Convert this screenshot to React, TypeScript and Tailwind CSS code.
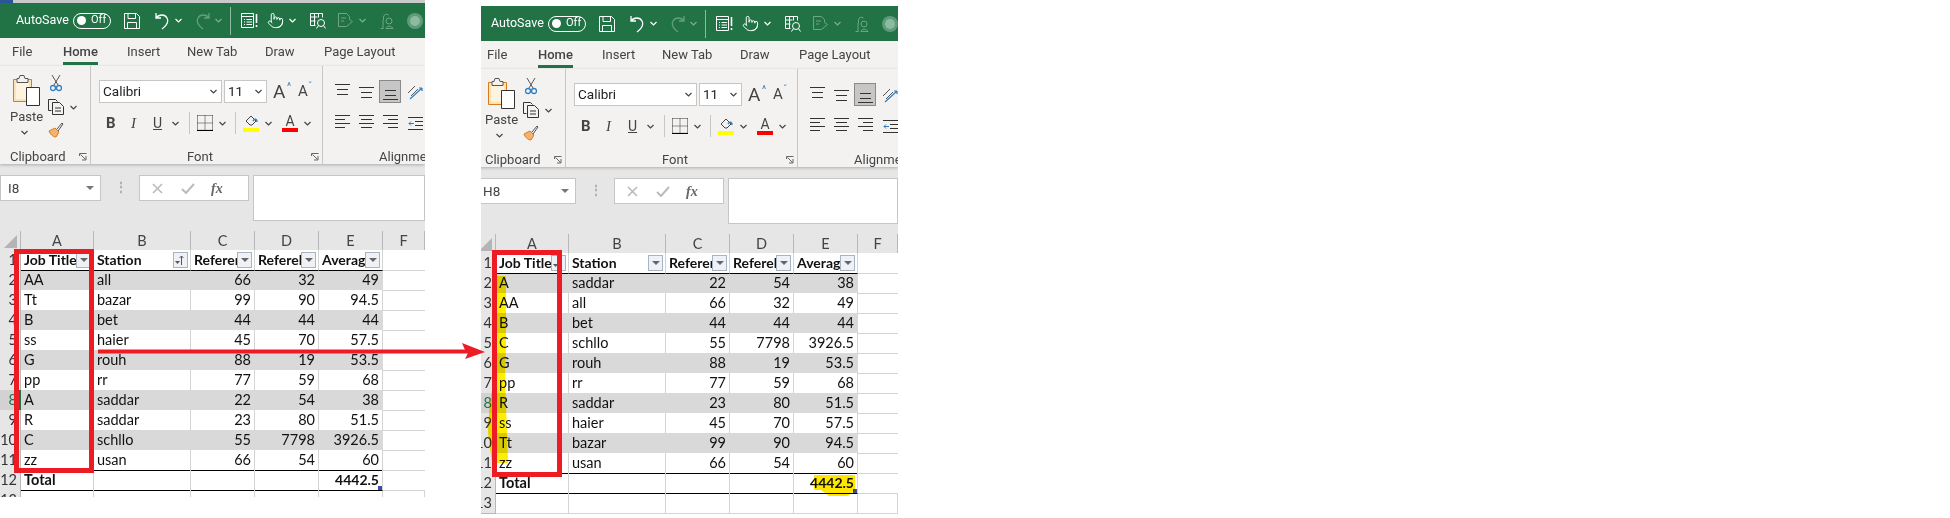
import { FC, ReactNode } from 'react';
import { Pointer } from 'lucide-react';

type Row = [string, string, string, string, string];

const LEFT_ROWS: Row[] = [
  ['AA', 'all', '66', '32', '49'],
  ['Tt', 'bazar', '99', '90', '94.5'],
  ['B', 'bet', '44', '44', '44'],
  ['ss', 'haier', '45', '70', '57.5'],
  ['G', 'rouh', '88', '19', '53.5'],
  ['pp', 'rr', '77', '59', '68'],
  ['A', 'saddar', '22', '54', '38'],
  ['R', 'saddar', '23', '80', '51.5'],
  ['C', 'schllo', '55', '7798', '3926.5'],
  ['zz', 'usan', '66', '54', '60'],
];

const RIGHT_ROWS: Row[] = [
  ['A', 'saddar', '22', '54', '38'],
  ['AA', 'all', '66', '32', '49'],
  ['B', 'bet', '44', '44', '44'],
  ['C', 'schllo', '55', '7798', '3926.5'],
  ['G', 'rouh', '88', '19', '53.5'],
  ['pp', 'rr', '77', '59', '68'],
  ['R', 'saddar', '23', '80', '51.5'],
  ['ss', 'haier', '45', '70', '57.5'],
  ['Tt', 'bazar', '99', '90', '94.5'],
  ['zz', 'usan', '66', '54', '60'],
];

const GRID = 'grid grid-cols-[21px_73px_97px_64px_64px_64px_1fr]';

const Chevron: FC<{ className?: string; color?: string }> = ({ className = '', color = '#444' }) => (
  <svg width="7" height="5" viewBox="0 0 7 5" className={`shrink-0 ${className}`} fill="none" stroke={color} strokeWidth="1.2">
    <path d="M.5 1l3 3 3-3" />
  </svg>
);

const Icon: FC<{ w: number; h: number; className?: string; stroke?: string; children: ReactNode }> = ({
  w,
  h,
  className = '',
  stroke = 'white',
  children,
}) => (
  <svg width={w} height={h} viewBox={`0 0 ${w} ${h}`} fill="none" stroke={stroke} strokeWidth="1" className={`shrink-0 ${className}`}>
    {children}
  </svg>
);

const Launcher = () => (
  <Icon w={8} h={8} stroke="#666">
    <path d="M.5 3V.5H7.5M1.5 1.5l5 5M3 7h4V3" />
  </Icon>
);

const TitleBar = () => (
  <div className="flex h-[35px] items-center bg-[#217346] text-white">
    <span className="ml-[16px] w-[52px] text-[12.5px]">AutoSave</span>
    <div className="ml-[5px] flex h-[16px] w-[38px] shrink-0 items-center rounded-full border border-white">
      <span className="ml-[3px] h-[9px] w-[9px] rounded-full bg-white" />
      <span className="ml-[5px] text-[11px]">Off</span>
    </div>
    <Icon w={16} h={16} className="ml-[13px]">
      <path d="M.5.5h12l3 3v12H.5zM4 .5v5h7.5v-5M3.5 15.5v-6h9v6" />
    </Icon>
    <Icon w={16} h={18} className="ml-[14px]">
      <path d="M2 1v5h5M2 6c3-4 9-4 11 0 2 4-1 8-5 11" strokeWidth="1.3" />
    </Icon>
    <Chevron color="white" className="ml-[5px]" />
    <Icon w={16} h={18} className="ml-[13px] -scale-x-100 opacity-30">
      <path d="M2 1v5h5M2 6c3-4 9-4 11 0 2 4-1 8-5 11" strokeWidth="1.3" />
    </Icon>
    <Chevron color="#7fae94" className="ml-[4px]" />
    <span className="ml-[8px] h-[28px] w-px bg-[#8fb9a3]" />
    <Icon w={17} h={15} className="ml-[10px]">
      <path d="M.5.5h12v14H.5zM.5 3.5h12M3 6.5h1m1.500 0H11M3 9h1m1.500 0H11M3 11.500h1m1.500 0H11" />
      <path d="M15.500 1v9M15.500 12v2" strokeWidth="1.6" />
    </Icon>
    <Pointer size={17} strokeWidth={1.4} className="ml-[9px] shrink-0" />
    <Chevron color="white" className="ml-[5px]" />
    <Icon w={17} h={17} className="ml-[14px]">
      <path d="M.5 1.500h12v4M.5 1.500v12h5M.5 5h7M.5 9h5M4.500 1.500v12M8.500 1.500v4" />
      <circle cx="11" cy="11" r="3.500" />
      <path d="M8.500 13.500l-2 3M13.500 13.500l2 3" />
    </Icon>
    <Icon w={15} h={16} className="ml-[11px] opacity-35">
      <path d="M.5.5h8l3 3v3l3 2-6 5H.5zM3 5h5M3 8h3" />
    </Icon>
    <Chevron color="#7fae94" className="ml-[6px]" />
    <Icon w={14} h={16} className="ml-[14px] opacity-35">
      <circle cx="9" cy="8" r="3" />
      <path d="M3.500 7V4a3 3 0 0 1 5-2M.5 15.500h3M3 7v8.500M6 15.500c0-3 6-3 7 0z" />
    </Icon>
    <span className="ml-[13px] flex h-[16px] w-[16px] shrink-0 items-center justify-center rounded-full bg-[#5f9b7b]">
      <span className="h-[10px] w-[10px] rounded-full bg-[#8bbba0]" />
    </span>
  </div>
);

const Tabs = () => (
  <div className="flex h-[28px] items-start bg-[#f3f2f1] pt-[5px] text-[13px] leading-[18px] text-[#444]">
    <span className="ml-[12px] w-[51px]">File</span>
    <span className="w-[64px] font-medium">
      <span className="inline-block border-b-[3px] border-[#217346] pb-[1px]">Home</span>
    </span>
    <span className="w-[60px]">Insert</span>
    <span className="w-[78px]">New Tab</span>
    <span className="w-[59px]">Draw</span>
    <span className="whitespace-nowrap">Page Layout</span>
  </div>
);

const AlignLines: FC<{ kind: 'top' | 'mid' | 'bottom' | 'left' | 'center' | 'right' }> = ({ kind }) => {
  const paths = {
    top: 'M0 1.500h15M2 6.500h11M2 11.500h11',
    mid: 'M0 4.500h15M2 9.500h11M2 14.500h11',
    bottom: 'M2 7.500h11M2 12.500h11M0 16.500h15',
    left: 'M0 1.500h15M0 5.500h10M0 9.500h15M0 13.500h10',
    center: 'M0 1.500h15M2 5.500h11M0 9.500h15M2 13.500h11',
    right: 'M0 1.500h15M5 5.500h10M0 9.500h15M5 13.500h10',
  };
  return (
    <Icon w={15} h={18} stroke="#333">
      <path d={paths[kind]} />
    </Icon>
  );
};

const ClipboardGroup = () => (
  <div className="flex h-[98px] w-[91px] shrink-0 flex-col border-r border-[#c8c6c4]">
    <div className="flex h-[83px]">
      <div className="ml-[10px] flex w-[30px] flex-col items-start pt-[9px]">
        <Icon w={28} h={31} stroke="#555" className="ml-[3px]">
          <path d="M.5 4.500h18v22H.5z" stroke="#d67b1f" fill="#fbe3b8" />
          <path d="M3 7h13v17H3z" stroke="none" fill="#fdf3df" />
          <path d="M7 .500h4l1 3h3v4H4v-4h2z" fill="#f3f2f1" />
          <path d="M13.500 12.500h13v18h-13z" fill="white" stroke="#333" />
        </Icon>
        <span className="mt-[3px] text-[13px] leading-[16px] text-[#444]">Paste</span>
        <Chevron className="ml-[11px] mt-[5px]" />
      </div>
      <div className="ml-[8px] flex flex-col items-start pt-[8px]">
        <Icon w={12} h={18} className="ml-[2px]" stroke="#555">
          <path d="M2 1l6 10M10 1L4 11" />
          <circle cx="3" cy="14" r="2.500" stroke="#2f7fc1" strokeWidth="1.300" />
          <circle cx="9" cy="14" r="2.500" stroke="#2f7fc1" strokeWidth="1.300" />
        </Icon>
        <div className="mt-[7px] flex items-center">
          <Icon w={16} h={16} stroke="#333">
            <path d="M.5.500h7l2 2M.5.500v11h3" />
            <path d="M4.500 3.500h7l4 4v8h-11zM7 9h6M7 12h6" fill="#f3f2f1" />
          </Icon>
          <Chevron className="ml-[6px]" />
        </div>
        <Icon w={16} h={16} className="mt-[7px]" stroke="#d67b1f">
          <path d="M1 9l6-3 4 4-3 5c-3 0-6-3-7-6z" fill="#f6b26b" />
          <path d="M9 7l5-6 1 1-5 7" stroke="#555" />
        </Icon>
      </div>
    </div>
    <div className="flex h-[15px] items-center justify-between pr-[3px] pl-[10px]">
      <span className="text-[13px] leading-[15px] text-[#444]">Clipboard</span>
      <Launcher />
    </div>
  </div>
);

const FontGroup = () => (
  <div className="flex h-[98px] w-[232px] shrink-0 flex-col border-r border-[#c8c6c4]">
    <div className="flex h-[83px] flex-col">
      <div className="mt-[14px] flex items-center">
        <div className="ml-[8px] flex h-[23px] w-[123px] items-center justify-between border border-[#c6c6c6] bg-white pr-[4px] pl-[3px] text-[13.5px] text-[#222]">
          Calibri
          <Chevron />
        </div>
        <div className="ml-[2px] flex h-[23px] w-[43px] items-center justify-between border border-[#c6c6c6] bg-white pr-[4px] pl-[3px] text-[13.5px] text-[#222]">
          11
          <Chevron />
        </div>
        <span className="relative ml-[6px] w-[25px] text-[19px] leading-none text-[#444]">
          A
          <span className="absolute top-[0px] left-[14px] text-[10px] text-[#2f7fc1]">^</span>
        </span>
        <span className="relative w-[20px] text-[15px] leading-none text-[#444]">
          A
          <span className="absolute -top-[2px] left-[10px] text-[10px] text-[#2f7fc1]">ˇ</span>
        </span>
      </div>
      <div className="mt-[8px] flex h-[24px] items-center text-[#444]">
        <span className="ml-[15px] w-[25px] text-[15px] font-bold">B</span>
        <span className="w-[22px] font-['Liberation_Serif'] text-[15px] italic">I</span>
        <span className="w-[19px] text-[14px] underline">U</span>
        <Chevron />
        <span className="ml-[10px] h-[22px] w-px bg-[#c8c6c4]" />
        <Icon w={16} h={16} className="ml-[7px]" stroke="#333">
          <path d="M.5.500h15M.5.500v15M15.500.500v15M8 .500v15M.5 8h15" strokeDasharray="1 1" />
          <path d="M0 15.500h16" strokeWidth="1.200" stroke="#000" />
        </Icon>
        <Chevron className="ml-[6px]" />
        <span className="ml-[9px] h-[22px] w-px bg-[#c8c6c4]" />
        <div className="ml-[7px] flex w-[16px] flex-col items-center">
          <Icon w={16} h={12} stroke="#444">
            <path d="M3 6l5-5 5 5-4 4H7z" />
            <path d="M10 6c2-3 4-2 4 1" stroke="#2f7fc1" strokeWidth="1.500" />
          </Icon>
          <span className="mt-[1px] h-[4px] w-[16px] bg-[#ffff00]" />
        </div>
        <Chevron className="ml-[6px]" />
        <div className="ml-[10px] flex w-[16px] flex-col items-center">
          <span className="text-[14px] leading-[13px] text-[#444]">A</span>
          <span className="h-[4px] w-[16px] bg-[#ff0000]" />
        </div>
        <Chevron className="ml-[6px]" />
      </div>
    </div>
    <div className="flex h-[15px] items-center justify-between pr-[3px] pl-[96px]">
      <span className="text-[13px] leading-[15px] text-[#444]">Font</span>
      <Launcher />
    </div>
  </div>
);

const AlignmentGroup = () => (
  <div className="flex h-[98px] flex-1 flex-col overflow-hidden">
    <div className="flex h-[83px] flex-col">
      <div className="mt-[14px] flex h-[23px] items-center">
        <div className="ml-[12px]"><AlignLines kind="top" /></div>
        <div className="ml-[9px]"><AlignLines kind="mid" /></div>
        <div className="ml-[5px] flex h-[23px] w-[22px] shrink-0 items-center justify-center border border-[#8a8a8a] bg-[#c6c6c6]">
          <AlignLines kind="bottom" />
        </div>
        <Icon w={16} h={16} className="ml-[6px]" stroke="#555">
          <path d="M1 9l7-7M4 12l7-7" />
          <path d="M3 15L15 4m0 0h-3m3 0v3" stroke="#2f7fc1" strokeWidth="1.200" />
        </Icon>
      </div>
      <div className="mt-[8px] flex h-[24px] items-center">
        <div className="ml-[12px]"><AlignLines kind="left" /></div>
        <div className="ml-[9px]"><AlignLines kind="center" /></div>
        <div className="ml-[9px]"><AlignLines kind="right" /></div>
        <Icon w={15} h={15} className="ml-[10px]" stroke="#333">
          <path d="M0 1.500h15M7 5.500h8M7 9.500h8M0 13.500h15" />
          <path d="M6 7.500H1m2-2l-2 2 2 2" stroke="#2f7fc1" />
        </Icon>
      </div>
    </div>
    <div className="flex h-[15px] items-center pl-[56px]">
      <span className="text-[13px] leading-[15px] whitespace-nowrap text-[#444]">Alignment</span>
    </div>
  </div>
);

const Ribbon = () => (
  <div className="relative flex h-[98px] bg-[#f3f2f1] shadow-[0_1px_3px_rgba(0,0,0,0.25)]">
    <ClipboardGroup />
    <FontGroup />
    <AlignmentGroup />
  </div>
);

const FormulaBar: FC<{ nameBox: string }> = ({ nameBox }) => (
  <div className="flex h-[67px] items-start bg-[#e6e6e6] pt-[11px]">
    <div className="flex h-[26px] w-[101px] shrink-0 items-center justify-between border border-[#c6c6c6] bg-white pr-[6px] pl-[7px] text-[13.5px] text-[#444]">
      {nameBox}
      <span className="h-0 w-0 border-x-[4px] border-t-[4px] border-x-transparent border-t-[#777]" />
    </div>
    <span className="mt-[5px] ml-[14px] text-[12px] leading-[14px] font-bold text-[#aaa]">⋮</span>
    <div className="ml-[12px] flex h-[26px] w-[110px] shrink-0 items-center border border-[#c6c6c6] bg-white">
      <Icon w={11} h={11} stroke="#bbb" className="ml-[12px]">
        <path d="M1 1l9 9M10 1l-9 9" strokeWidth="1.600" />
      </Icon>
      <Icon w={14} h={11} stroke="#bbb" className="ml-[18px]">
        <path d="M1 6l4 4 8-9" strokeWidth="2" />
      </Icon>
      <span className="ml-[16px] font-['Liberation_Serif'] text-[14px] font-bold text-[#666] italic">fx</span>
    </div>
    <div className="ml-[4px] h-[46px] flex-1 border border-[#c6c6c6] bg-white" />
  </div>
);

const FilterButton: FC<{ sorted?: boolean }> = ({ sorted }) => (
  <span className="absolute top-[2px] right-[2px] flex h-[16px] w-[15px] items-center justify-center border border-[#a9b4c2] bg-[#eef2f6]">
    {sorted ? (
      <Icon w={11} h={11} stroke="#555">
        <path d="M6.500 10V1m-2 2l2-2 2 2" />
        <path d="M0 6h5l-2.500 3z" fill="#555" stroke="none" />
      </Icon>
    ) : (
      <span className="h-0 w-0 border-x-[4px] border-t-[4px] border-x-transparent border-t-[#666]" />
    )}
  </span>
);

const ColHeader = () => (
  <div className={`${GRID} h-[19px] bg-[#e6e6e6] text-[14.5px] leading-[19px] text-[#444]`}>
    <div className="flex items-end justify-end border-r border-[#b8b8b8] pr-[3px] pb-[2px]">
      <svg width="13" height="13" viewBox="0 0 13 13" className="shrink-0"><path d="M13 0v13H0z" fill="#b4b4b4" /></svg>
    </div>
    {['A', 'B', 'C', 'D', 'E', 'F'].map((c) => (
      <div key={c} className="border-r border-[#b8b8b8] text-center">{c}</div>
    ))}
  </div>
);

const RowHead: FC<{ n: number; selected?: boolean }> = ({ n, selected }) => (
  <div
    className={
      selected
        ? 'border-r-2 border-b border-[#217346] border-b-[#b8b8b8] bg-[#d2d2d2] pr-[2px] text-right text-[#217346]'
        : 'border-r border-b border-[#b8b8b8] bg-[#e6e6e6] pr-[3px] text-right text-[#333]'
    }
  >
    {n}
  </div>
);

const Sheet: FC<{ rows: Row[]; sortedCol: 'A' | 'B'; total: string }> = ({ rows, sortedCol, total }) => {
  const head = ['Job Title', 'Station', 'Referen', 'Referel', 'Average'];
  return (
    <div className="bg-white font-['Lato'] text-[14.5px] leading-[20px] text-[#111]">
      <ColHeader />
      <div className={`${GRID} h-[20px]`}>
        <RowHead n={1} />
        {head.map((h, i) => (
          <div key={h} className="relative overflow-hidden border-r border-b border-r-[#d4d4d4] border-b-black pl-[3px] text-[14px] font-bold whitespace-nowrap">
            {h}
            <FilterButton sorted={(sortedCol === 'A' && i === 0) || (sortedCol === 'B' && i === 1)} />
          </div>
        ))}
        <div className="border-b border-[#d4d4d4]" />
      </div>
      {rows.map((r, i) => {
        const band = i % 2 === 0;
        const last = i === rows.length - 1;
        const edge = last ? 'border-b-black' : band ? 'border-b-[#d9d9d9]' : 'border-b-[#d4d4d4]';
        const fill = band ? 'bg-[#d9d9d9] border-r-[#d9d9d9]' : 'bg-white border-r-[#d4d4d4]';
        return (
          <div key={i} className={`${GRID} h-[20px]`}>
            <RowHead n={i + 2} selected={i === 6} />
            {r.map((v, j) => (
              <div key={j} className={`border-r border-b ${fill} ${edge} ${j < 2 ? 'pl-[3px]' : 'pr-[3px] text-right'}`}>
                {v}
              </div>
            ))}
            <div className="border-b border-[#d4d4d4]" />
          </div>
        );
      })}
      <div className={`${GRID} h-[20px]`}>
        <RowHead n={12} />
        <div className="border-r border-b border-r-[#d4d4d4] border-b-black pl-[3px] font-bold">Total</div>
        <div className="border-r border-b border-r-[#d4d4d4] border-b-black" />
        <div className="border-r border-b border-r-[#d4d4d4] border-b-black" />
        <div className="border-r border-b border-r-[#d4d4d4] border-b-black" />
        <div className="relative border-r border-b border-r-[#d4d4d4] border-b-black pr-[3px] text-right text-[14px] font-bold">
          {total}
          <span className="absolute right-0 bottom-0 h-[4px] w-[4px] bg-[#3f4fa0]" />
        </div>
        <div className="border-b border-[#d4d4d4]" />
      </div>
      <div className={`${GRID} h-[20px]`}>
        <RowHead n={13} />
        {[0, 1, 2, 3, 4, 5].map((c) => (
          <div key={c} className="border-r border-b border-[#d4d4d4]" />
        ))}
      </div>
    </div>
  );
};

const ExcelWindow: FC<{ nameBox: string; rows: Row[]; sortedCol: 'A' | 'B' }> = ({ nameBox, rows, sortedCol }) => (
  <div className="font-['Roboto']">
    <TitleBar />
    <Tabs />
    <Ribbon />
    <FormulaBar nameBox={nameBox} />
    <Sheet rows={rows} sortedCol={sortedCol} total="4442.5" />
  </div>
);

export default function App() {
  return (
    <div className="relative h-[518px] w-[1950px] overflow-hidden bg-white">
      <div className="absolute top-0 left-0 h-[497px] w-[425px] overflow-hidden">
        <div className="relative h-[3px] bg-[#c9c9c9]">
          <span className="absolute top-0 left-0 h-[3px] w-[13px] bg-[#2b579a]" />
        </div>
        <ExcelWindow nameBox="I8" rows={LEFT_ROWS} sortedCol="B" />
      </div>

      <div className="absolute top-[6px] left-[481px] h-[512px] w-[417px] overflow-hidden">
        <div className="ml-[-6px] w-[423px]">
          <ExcelWindow nameBox="H8" rows={RIGHT_ROWS} sortedCol="A" />
        </div>
      </div>

      {/* highlighter marks, painted over the second sheet */}
      <svg width="1950" height="518" className="pointer-events-none absolute inset-0 mix-blend-multiply">
        <path d="M497 276h9v70l-1 30 3 87h-16l-4-30c0-20 4-45 8-66l1-10z" fill="#ffee00" />
        <path d="M814 475h41v16l-8 5h-18l-8-6h-7z" fill="#ffe600" />
      </svg>

      {/* red annotations */}
      <div className="absolute top-[249px] left-[14px] h-[224px] w-[80px] border-[5px] border-[#ed1c24]" />
      <div className="absolute top-[250px] left-[492px] h-[227px] w-[70px] border-[5px] border-[#ed1c24]" />
      <svg width="400" height="24" viewBox="0 0 400 24" className="absolute top-[340px] left-[92px]" fill="#ed1c24">
        <path d="M6 9.500h372v4H6z" />
        <path d="M370 3l23 9-20 7 3-6-3-3z" />
      </svg>
    </div>
  );
}
